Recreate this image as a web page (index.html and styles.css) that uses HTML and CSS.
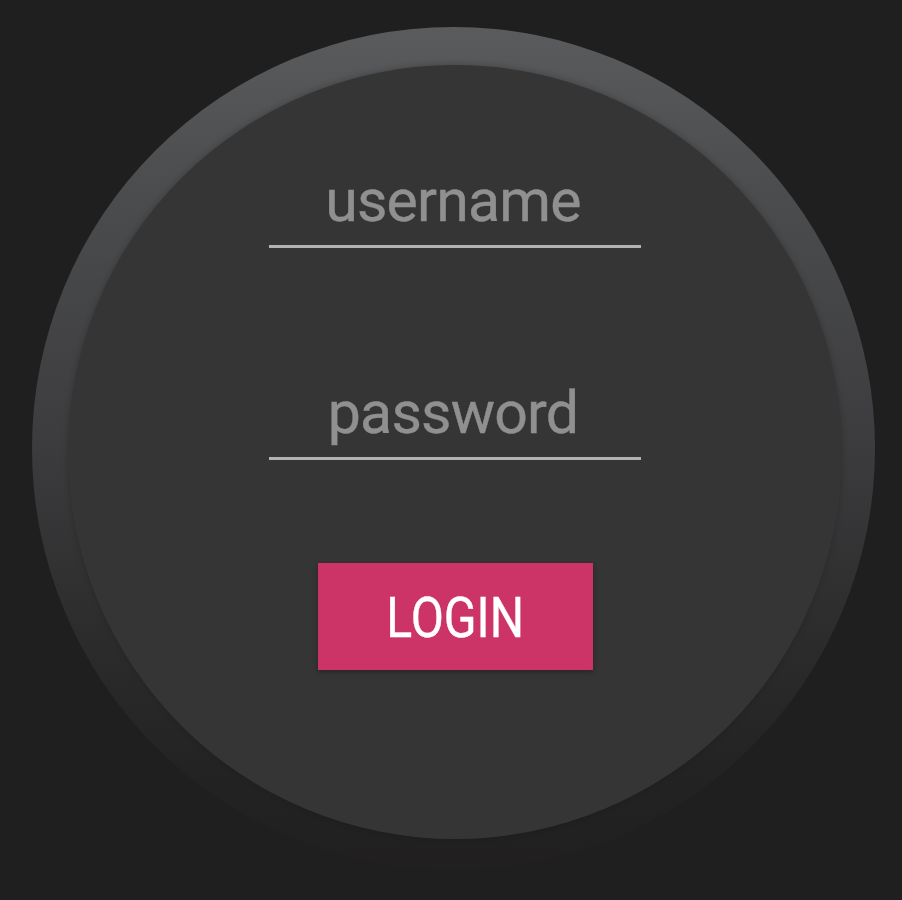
FILE: index.html
```html
<!DOCTYPE html>
<html>
<head>
<meta charset="utf-8">
<title>Login</title>
<link rel="stylesheet" href="styles.css">
</head>
<body>
<div class="page">
  <div class="watch">
    <form class="face">
      <div class="field">
        <span class="label">username</span>
      </div>
      <div class="field field-password">
        <span class="label">password</span>
      </div>
      <button type="button" class="login"><span class="login-text">LOGIN</span></button>
    </form>
  </div>
</div>
</body>
</html>
```

FILE: styles.css
```css
html, body {
  margin: 0;
  padding: 0;
  background: #1f1f1f;
}

.page {
  width: 902px;
  height: 900px;
  box-sizing: border-box;
  padding: 27px 0 0 32px;
  font-family: Roboto, "Noto Sans", sans-serif;
}

.watch {
  width: 843px;
  height: 843px;
  box-sizing: border-box;
  border-radius: 50%;
  padding: 38px 0 0 36px;
  background: linear-gradient(to bottom, #5a5b5d 0%, #4b4c4e 20%, #3d3d3f 48%, #2c2c2d 72%, #232323 88%, #211f20 100%);
}

.face {
  width: 774px;
  height: 774px;
  margin: 0;
  border-radius: 50%;
  background: #353535;
  box-shadow: 0 -1px 6px rgba(0, 0, 0, 0.2);
  display: flex;
  flex-direction: column;
  align-items: center;
  box-sizing: border-box;
  padding-top: 106px;
}

.field {
  width: 372px;
  border-bottom: 3px solid #b3b3b3;
  text-align: center;
  padding-bottom: 14px;
}

.field-password {
  margin-top: 135px;
}

.label {
  display: block;
  font-size: 59px;
  line-height: 60px;
  letter-spacing: -0.8px;
  color: #909090;
  margin-right: 4px;
  -webkit-text-stroke: 0.4px #909090;
}

.login {
  margin-top: 103px;
  width: 275px;
  height: 107px;
  border: none;
  padding: 0;
  background: #cc3366;
  box-shadow: 0 2px 5px rgba(0, 0, 0, 0.3);
  display: flex;
  align-items: center;
  justify-content: center;
  font-family: Roboto, "Noto Sans", sans-serif;
}

.login-text {
  display: inline-block;
  font-size: 56px;
  line-height: 60px;
  color: #ffffff;
  transform: scaleX(0.86);
  margin-top: 2px;
  -webkit-text-stroke: 0.4px #ffffff;
}
```
